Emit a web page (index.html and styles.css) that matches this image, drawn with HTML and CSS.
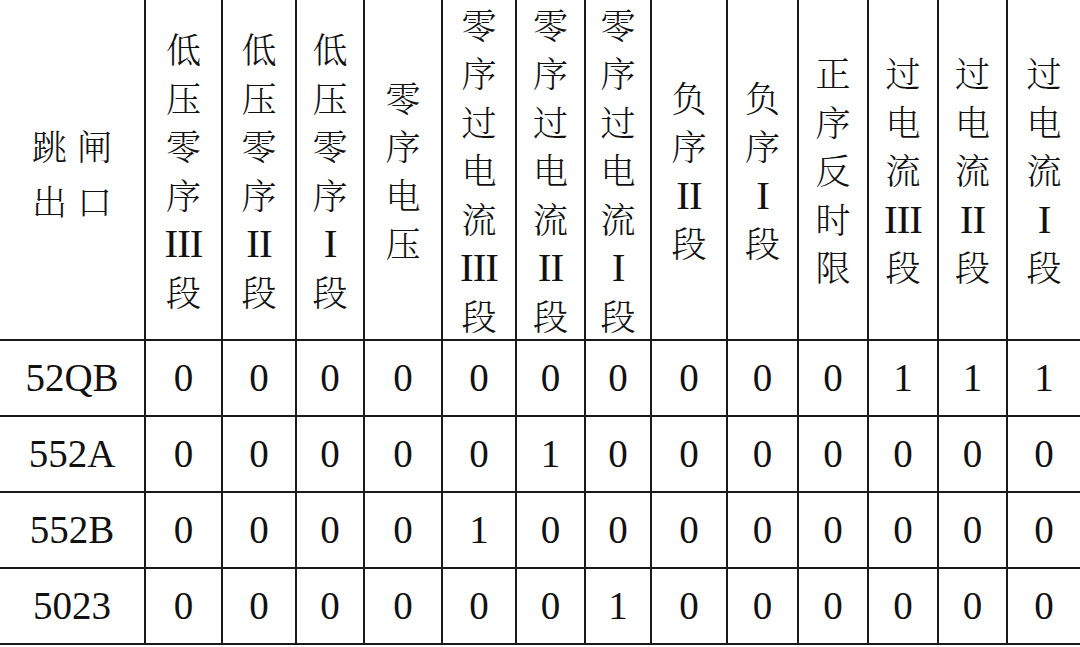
FILE: index.html
```html
<!DOCTYPE html>
<html lang="zh-CN">
<head>
<meta charset="utf-8">
<title>跳闸出口矩阵</title>
<link rel="stylesheet" href="styles.css">
</head>
<body>
<div class="matrix">
  <div class="cell head first"><div class="pair">跳闸<br>出口</div></div>
  <div class="cell head"><div class="stack">低<br>压<br>零<br>序<br><span class="rn">III</span><br>段</div></div>
  <div class="cell head"><div class="stack">低<br>压<br>零<br>序<br><span class="rn">II</span><br>段</div></div>
  <div class="cell head"><div class="stack">低<br>压<br>零<br>序<br><span class="rn">I</span><br>段</div></div>
  <div class="cell head"><div class="stack">零<br>序<br>电<br>压</div></div>
  <div class="cell head"><div class="stack">零<br>序<br>过<br>电<br>流<br><span class="rn">III</span><br>段</div></div>
  <div class="cell head"><div class="stack">零<br>序<br>过<br>电<br>流<br><span class="rn">II</span><br>段</div></div>
  <div class="cell head"><div class="stack">零<br>序<br>过<br>电<br>流<br><span class="rn">I</span><br>段</div></div>
  <div class="cell head"><div class="stack">负<br>序<br><span class="rn">II</span><br>段</div></div>
  <div class="cell head"><div class="stack">负<br>序<br><span class="rn">I</span><br>段</div></div>
  <div class="cell head"><div class="stack">正<br>序<br>反<br>时<br>限</div></div>
  <div class="cell head"><div class="stack">过<br>电<br>流<br><span class="rn">III</span><br>段</div></div>
  <div class="cell head"><div class="stack">过<br>电<br>流<br><span class="rn">II</span><br>段</div></div>
  <div class="cell head last"><div class="stack">过<br>电<br>流<br><span class="rn">I</span><br>段</div></div>

  <div class="cell data first">52QB</div>
  <div class="cell data">0</div><div class="cell data">0</div><div class="cell data">0</div><div class="cell data">0</div>
  <div class="cell data">0</div><div class="cell data">0</div><div class="cell data">0</div><div class="cell data">0</div>
  <div class="cell data">0</div><div class="cell data">0</div><div class="cell data">1</div><div class="cell data">1</div>
  <div class="cell data last">1</div>

  <div class="cell data first">552A</div>
  <div class="cell data">0</div><div class="cell data">0</div><div class="cell data">0</div><div class="cell data">0</div>
  <div class="cell data">0</div><div class="cell data">1</div><div class="cell data">0</div><div class="cell data">0</div>
  <div class="cell data">0</div><div class="cell data">0</div><div class="cell data">0</div><div class="cell data">0</div>
  <div class="cell data last">0</div>

  <div class="cell data first">552B</div>
  <div class="cell data">0</div><div class="cell data">0</div><div class="cell data">0</div><div class="cell data">0</div>
  <div class="cell data">1</div><div class="cell data">0</div><div class="cell data">0</div><div class="cell data">0</div>
  <div class="cell data">0</div><div class="cell data">0</div><div class="cell data">0</div><div class="cell data">0</div>
  <div class="cell data last">0</div>

  <div class="cell data first">5023</div>
  <div class="cell data">0</div><div class="cell data">0</div><div class="cell data">0</div><div class="cell data">0</div>
  <div class="cell data">0</div><div class="cell data">0</div><div class="cell data">1</div><div class="cell data">0</div>
  <div class="cell data">0</div><div class="cell data">0</div><div class="cell data">0</div><div class="cell data">0</div>
  <div class="cell data last">0</div>
</div>
</body>
</html>
```

FILE: styles.css
```css
html, body {
  margin: 0;
  padding: 0;
  background: #ffffff;
}

body {
  width: 1080px;
  height: 647px;
  overflow: hidden;
  color: #111111;
  font-family: "Noto Serif CJK SC", "Noto Sans CJK SC", "Liberation Serif", serif;
}

.matrix {
  display: grid;
  grid-template-columns: 146px 77px 74px 68px 78px 74px 69px 66px 76px 71px 70px 70px 69px 72px;
  grid-template-rows: 341px 76px 76px 76px 76px;
  width: 1080px;
}

.cell {
  box-sizing: border-box;
  border-right: 2px solid #1a1a1a;
  border-bottom: 2px solid #1a1a1a;
  display: flex;
  align-items: center;
  justify-content: center;
  text-align: center;
}

.cell.last {
  border-right: none;
}

.head {
  font-size: 35px;
  font-weight: 300;
}

.stack {
  line-height: 48.5px;
}

.rn {
  font-family: "Liberation Serif", serif;
  font-size: 41px;
  line-height: 40px;
  letter-spacing: -1px;
  font-weight: 400;
}

.pair {
  line-height: 55px;
  letter-spacing: 10px;
  padding-left: 10px;
  padding-top: 6px;
}

.data {
  font-family: "Liberation Serif", serif;
  font-size: 39px;
  line-height: 1.15;
}
```
